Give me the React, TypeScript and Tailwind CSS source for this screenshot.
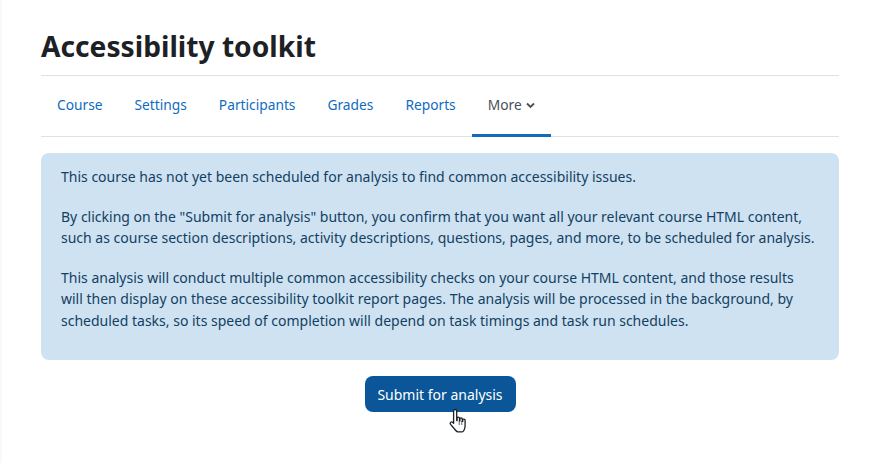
import React from 'react';

const tabs = ['Course', 'Settings', 'Participants', 'Grades', 'Reports'];

function HandCursor() {
  return (
    <svg width="20" height="26" viewBox="0 0 20 26" className="absolute left-[449px] top-[408px]">
      <path
        d="M6.200 1.500c1 0 1.500.7 1.500 1.700v9.300l.4.1v-2.500c0-1.400 2.300-1.400 2.400 0v2.700l.4.1v-1.900c0-1.400 2.300-1.400 2.400 0v2.300l.4.1v-1.300c0-1.400 2.400-1.300 2.400.2v5.500c0 2.200-.5 3.400-1.100 4.500-.5.9-1 1.600-1.800 1.600H9c-1 0-1.600-.6-2.200-1.400l-5.200-6.200c-1.100-1.400.6-3.100 2-2l1 1V3.200c0-1 .6-1.700 1.600-1.700z"
        fill="#fff"
        stroke="#1d2125"
        strokeWidth="1.300"
        strokeLinejoin="round"
      />
      <path d="M10.200 13v4M12.800 13v4" stroke="#1d2125" strokeWidth="0.700" fill="none" />
    </svg>
  );
}

export default function App() {
  return (
    <div className="relative h-[463px] w-[878px] overflow-hidden bg-white font-['Noto_Sans','Open_Sans',sans-serif] text-[#1d2125]">
      <div className="absolute left-0 top-0 h-full w-[2px] bg-[#f8f9fa]" />
      <div className="pl-[41px] pr-[39px]">
        <h1 className="flex h-[75px] items-end pb-[10px] text-[28.200px] font-bold leading-[38px]">Accessibility toolkit</h1>
        <nav className="flex h-[62px] border-y border-[#dee2e6]">
          {tabs.map((tab) => (
            <a key={tab} className="flex h-full items-center px-4 pb-[2px] text-[13.750px] text-[#0f6cbf]">
              {tab}
            </a>
          ))}
          <a className="mb-[-1px] flex items-center gap-[4px] border-b-[3px] border-[#0f6cbf] px-4 text-[13.750px] text-[#495057]">
            More
            <svg width="9" height="7" viewBox="0 0 9 7">
              <path d="M1 1.500l3.500 3.500L8 1.500" fill="none" stroke="#495057" strokeWidth="1.800" />
            </svg>
          </a>
        </nav>
        <div className="mt-[16px] h-[207px] rounded-lg bg-[#cfe2f1] px-5 py-[13px] text-[14px] leading-[21.600px] text-[#123f63]">
          <p className="mb-[18px]">This course has not yet been scheduled for analysis to find common accessibility issues.</p>
          <p className="mb-[18px]">
            By clicking on the "Submit for analysis" button, you confirm that you want all your relevant course HTML content,
            <br />
            such as course section descriptions, activity descriptions, questions, pages, and more, to be scheduled for analysis.
          </p>
          <p>
            This analysis will conduct multiple common accessibility checks on your course HTML content, and those results
            <br />
            will then display on these accessibility toolkit report pages. The analysis will be processed in the background, by
            <br />
            scheduled tasks, so its speed of completion will depend on task timings and task run schedules.
          </p>
        </div>
        <div className="mt-[16px] flex justify-center">
          <button className="h-9 w-[151px] rounded-lg bg-[#0a5699] text-[14px] text-white">Submit for analysis</button>
        </div>
      </div>
      <HandCursor />
    </div>
  );
}
